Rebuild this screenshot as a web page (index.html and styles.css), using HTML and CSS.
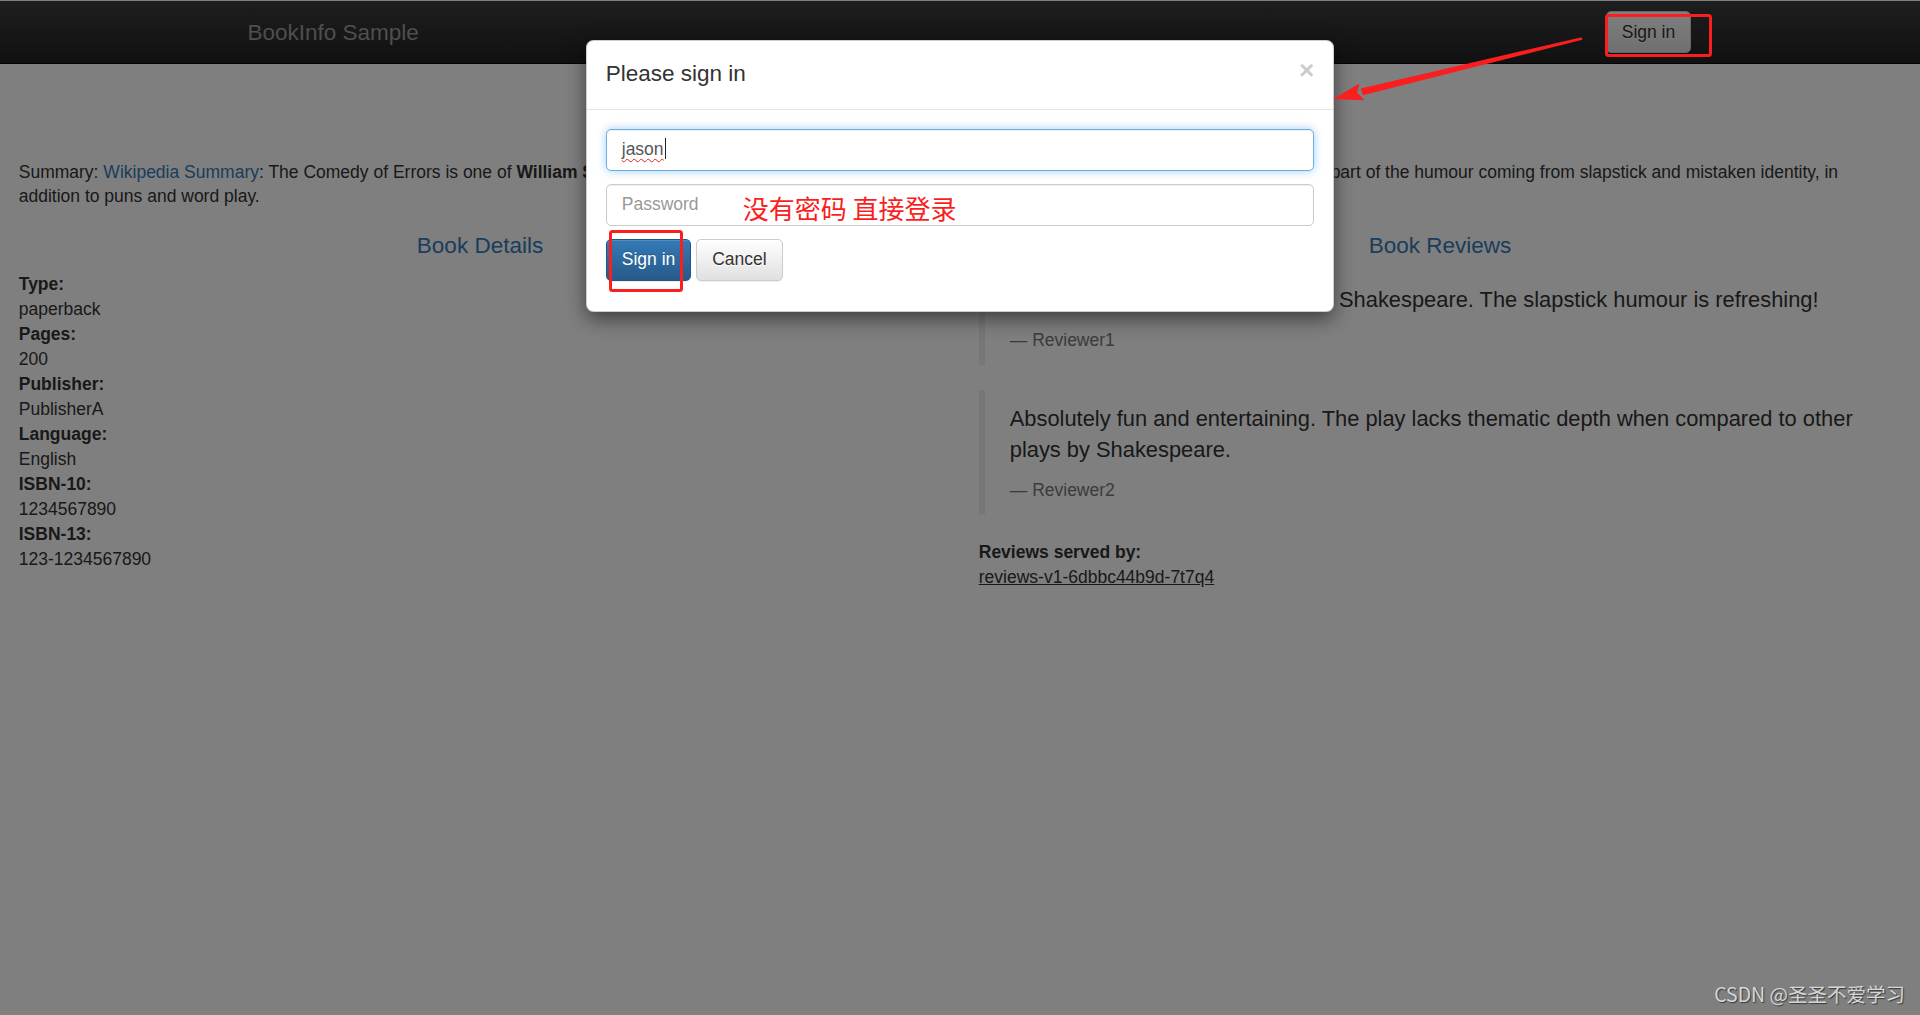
FILE: index.html
```html
<!DOCTYPE html>
<html lang="en">
<head>
<meta charset="utf-8">
<title>Simple Bookstore App</title>
<link rel="stylesheet" href="styles.css">
</head>
<body>
<nav class="navbar">
  <div class="nav-inner">
    <a class="brand" href="#">BookInfo Sample</a>
    <button type="button" class="btn btn-default nav-btn">Sign in</button>
  </div>
</nav>

<div class="page">
  <h3 class="book-title">The Comedy of Errors</h3>
  <p class="summary">Summary: <a href="#">Wikipedia Summary</a>: The Comedy of Errors is one of <b>William Shakespeare's</b> early plays. It is his shortest and one of his most farcical comedies, with a major part of the humour coming from slapstick and mistaken identity, in addition to puns and word play.</p>
  <div class="row">
    <div class="col">
      <h4 class="col-title">Book Details</h4>
      <dl class="details">
        <dt>Type:</dt><dd>paperback</dd>
        <dt>Pages:</dt><dd>200</dd>
        <dt>Publisher:</dt><dd>PublisherA</dd>
        <dt>Language:</dt><dd>English</dd>
        <dt>ISBN-10:</dt><dd>1234567890</dd>
        <dt>ISBN-13:</dt><dd>123-1234567890</dd>
      </dl>
    </div>
    <div class="col">
      <h4 class="col-title">Book Reviews</h4>
      <blockquote>
        <p>An extremely entertaining play by Shakespeare. The slapstick humour is refreshing!</p>
        <small>Reviewer1</small>
      </blockquote>
      <blockquote>
        <p>Absolutely fun and entertaining. The play lacks thematic depth when compared to other plays by Shakespeare.</p>
        <small>Reviewer2</small>
      </blockquote>
      <dl class="served">
        <dt>Reviews served by:</dt>
        <dd><u>reviews-v1-6dbbc44b9d-7t7q4</u></dd>
      </dl>
    </div>
  </div>
</div>

<div class="backdrop"></div>

<div class="modal">
  <div class="modal-content">
    <div class="modal-header">
      <h4 class="modal-title">Please sign in</h4>
      <span class="close">&times;</span>
    </div>
    <div class="modal-body">
      <div class="field">
        <div class="form-control focus"><span class="typed">jason</span><span class="caret"></span></div>
      </div>
      <div class="field">
        <input type="password" class="form-control" placeholder="Password">
        <span class="note">没有密码 直接登录</span>
      </div>
      <div class="field actions">
        <button type="button" class="btn btn-primary">Sign in</button>
        <button type="button" class="btn btn-default">Cancel</button>
      </div>
    </div>
  </div>
</div>

<svg class="marks" width="1920" height="1015" viewBox="0 0 1920 1015" xmlns="http://www.w3.org/2000/svg">
  <rect x="1606.5" y="15.5" width="104" height="40" rx="2" fill="none" stroke="#fa1e1e" stroke-width="3"/>
  <rect x="610.5" y="231.5" width="71" height="59" rx="2" fill="none" stroke="#fa1e1e" stroke-width="3"/>
  <polygon points="1582.4,39.8 1581.6,37.2 1360.8,88.4 1362.8,95.2" fill="#fa1e1e"/>
  <polygon points="1333,99 1359.5,83.6 1357,92.4 1364.5,100.2" fill="#fa1e1e"/>
</svg>

<div class="watermark">CSDN @圣圣不爱学习</div>
</body>
</html>
```

FILE: styles.css
```css
* {
  box-sizing: border-box;
}

html,
body {
  margin: 0;
  height: 100%;
}

body {
  position: relative;
  overflow: hidden;
  background: #fff;
  color: #333;
  font-family: "Liberation Sans", Arial, Helvetica, sans-serif;
  font-size: 17.5px;
  line-height: 1.42857;
}

/* ---------- navbar ---------- */
.navbar {
  height: 64px;
  border-top: 1px solid #fff;
  border-bottom: 1px solid #080808;
  background: linear-gradient(to bottom, #3c3c3c 0, #222 100%);
}

.nav-inner {
  width: 1462.5px;
  margin: 0 auto;
  display: flex;
  justify-content: space-between;
  align-items: flex-start;
}

.brand {
  padding: 18.75px;
  font-size: 22.5px;
  line-height: 25px;
  color: #9d9d9d;
  text-decoration: none;
}

.nav-btn {
  margin-top: 10px;
}

/* ---------- buttons ---------- */
.btn {
  display: inline-block;
  height: 42px;
  padding: 7.5px 15px;
  border: 1px solid transparent;
  border-radius: 5px;
  font-family: "Liberation Sans", Arial, Helvetica, sans-serif;
  font-size: 17.5px;
  line-height: 25px;
  white-space: nowrap;
  vertical-align: middle;
  cursor: pointer;
}

.btn-default {
  color: #333;
  background: linear-gradient(to bottom, #fff 0, #e0e0e0 100%);
  border-color: #ccc;
  text-shadow: 0 1px 0 #fff;
  box-shadow: inset 0 1px 0 rgba(255, 255, 255, .15), 0 1px 1px rgba(0, 0, 0, .075);
}

.btn-primary {
  color: #fff;
  background: linear-gradient(to bottom, #337ab7 0, #265a88 100%);
  border-color: #245580;
  text-shadow: 0 -1px 0 rgba(0, 0, 0, .2);
  box-shadow: inset 0 1px 0 rgba(255, 255, 255, .15), 0 1px 1px rgba(0, 0, 0, .075);
}

/* ---------- page ---------- */
.page {
  padding: 25px 18.75px 0;
}

.book-title {
  margin: 25px 0 12.5px;
  font-size: 30px;
  line-height: 33px;
  font-weight: 500;
  text-align: center;
  color: #337ab7;
}

.summary {
  margin: 0 0 12.5px;
}

.summary a {
  color: #337ab7;
  text-decoration: none;
}

.row {
  display: flex;
  margin: 0 -18.75px;
}

.col {
  flex: 0 0 50%;
  padding: 0 18.75px;
}

.col-title {
  margin: 12.5px 0;
  font-size: 22.5px;
  line-height: 1.1;
  font-weight: 500;
  text-align: center;
  color: #337ab7;
}

dl {
  margin: 0 0 25px;
}

dt {
  font-weight: bold;
}

dd {
  margin: 0;
}

blockquote {
  margin: 0 0 25px;
  padding: 12.5px 25px;
  border-left: 6.25px solid #eee;
  font-size: 21.875px;
}

blockquote p {
  margin: 0 0 12.5px;
}

blockquote small {
  display: block;
  font-size: 80%;
  line-height: 1.42857;
  color: #777;
}

blockquote small::before {
  content: "\2014 \00A0";
}

/* ---------- backdrop ---------- */
.backdrop {
  position: absolute;
  inset: 0;
  background: #000;
  opacity: .5;
}

/* ---------- modal ---------- */
.modal {
  position: absolute;
  top: 40px;
  left: 50%;
  width: 748px;
  margin-left: -374px;
}

.modal-content {
  background: #fff;
  border: 1px solid rgba(0, 0, 0, .2);
  border-radius: 7.5px;
  box-shadow: 0 6.25px 18.75px rgba(0, 0, 0, .5);
}

.modal-header {
  display: flex;
  justify-content: space-between;
  align-items: flex-start;
  padding: 17.5px 18.75px 20px;
  border-bottom: 1px solid #e5e5e5;
}

.modal-title {
  margin: 0;
  font-size: 22.5px;
  line-height: 30.5px;
  font-weight: 500;
  color: #333;
}

.close {
  margin-top: -1.5px;
  font-size: 26.25px;
  font-weight: bold;
  line-height: 1;
  color: #000;
  opacity: .2;
  text-shadow: 0 1px 0 #fff;
}

.modal-body {
  padding: 18.75px 18.75px 17px;
}

.field {
  position: relative;
  margin-bottom: 13px;
}

.form-control {
  display: block;
  width: 100%;
  height: 42px;
  padding: 7.5px 15px;
  border: 1px solid #ccc;
  border-radius: 5px;
  background: #fff;
  color: #555;
  font-family: "Liberation Sans", Arial, Helvetica, sans-serif;
  font-size: 17.5px;
  line-height: 25px;
  box-shadow: inset 0 1px 1px rgba(0, 0, 0, .075);
  outline: none;
}

.form-control::placeholder {
  color: #999;
}

.form-control.focus {
  border-color: #66afe9;
  box-shadow: inset 0 1px 1px rgba(0, 0, 0, .075), 0 0 10px rgba(102, 175, 233, .6);
}

.typed {
  text-decoration: underline wavy #e32020;
  text-decoration-thickness: 1px;
  text-underline-offset: 3px;
}

.caret {
  display: inline-block;
  width: 1px;
  height: 21px;
  margin-left: 1px;
  vertical-align: -4px;
  background: #222;
}

.note {
  position: absolute;
  left: 137px;
  top: 11px;
  font-family: "Noto Sans CJK SC", "Noto Sans", sans-serif;
  font-size: 26px;
  line-height: 26px;
  color: #fa1e1e;
  white-space: nowrap;
}

/* ---------- annotations ---------- */
.marks {
  position: absolute;
  top: 0;
  left: 0;
  pointer-events: none;
}

.watermark {
  position: absolute;
  right: 15px;
  bottom: 11px;
  font-family: "Noto Sans CJK SC", "Noto Sans", sans-serif;
  font-size: 19.5px;
  line-height: 20px;
  color: #d6d6d6;
  text-shadow: 1px 1px 1px #3a3a3a;
  white-space: nowrap;
}
```
